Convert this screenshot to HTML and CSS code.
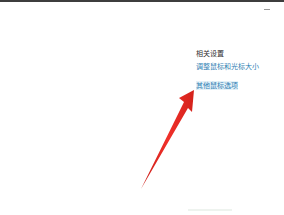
FILE: index.html
```html
<!DOCTYPE html>
<html lang="zh">
<head>
<meta charset="utf-8">
<link rel="stylesheet" href="styles.css">
</head>
<body>
<div class="window">
  <div class="titlebar"><span class="min"></span></div>
  <div class="content">
    <section class="related">
      <div class="heading">相关设置</div>
      <a class="link">调整鼠标和光标大小</a>
      <a class="link focus">其他鼠标选项</a>
    </section>
  </div>
  <div class="footer"><span class="faint"></span></div>
  <svg class="arrow" width="284" height="215" viewBox="0 0 284 215">
    <defs>
      <linearGradient id="g" x1="0" y1="0" x2="1" y2="0">
        <stop offset="0" stop-color="#c81d16"/>
        <stop offset="0.5" stop-color="#f0302a"/>
        <stop offset="1" stop-color="#d4221b"/>
      </linearGradient>
    </defs>
    <polygon points="194,90 179,98 184,102 141,189 188,108 192,112" fill="url(#g)"/>
  </svg>
</div>
</body>
</html>
```
FILE: styles.css
```css
html, body {
  margin: 0;
  padding: 0;
  background: #ffffff;
}
.window {
  position: relative;
  width: 284px;
  height: 215px;
  overflow: hidden;
  border-top: 2px solid #3d3d3d;
  box-sizing: border-box;
  font-family: "Noto Sans CJK SC", "Noto Sans", sans-serif;
  display: flex;
  flex-direction: column;
}
.titlebar {
  height: 14px;
  display: flex;
  justify-content: flex-end;
  align-items: center;
  padding-right: 14px;
}
.min {
  width: 6px;
  height: 1px;
  background: #9a9a9a;
  margin-top: 1px;
}
.content {
  flex: 1;
  display: flex;
  padding-left: 196px;
  padding-top: 33px;
}
.related {
  display: flex;
  flex-direction: column;
  align-items: flex-start;
}
.heading {
  font-size: 7px;
  line-height: 9px;
  color: #2e2e2e;
}
.link {
  font-size: 7px;
  line-height: 9px;
  color: #2f7fb4;
  margin-top: 4px;
}
.link.focus {
  margin-top: 10px;
  background: #e4f1f8;
}
.footer {
  height: 6px;
  display: flex;
  padding-left: 188px;
}
.faint {
  width: 44px;
  height: 2px;
  background: #eef3ef;
}
.arrow {
  position: absolute;
  left: 0;
  top: -2px;
}
```
